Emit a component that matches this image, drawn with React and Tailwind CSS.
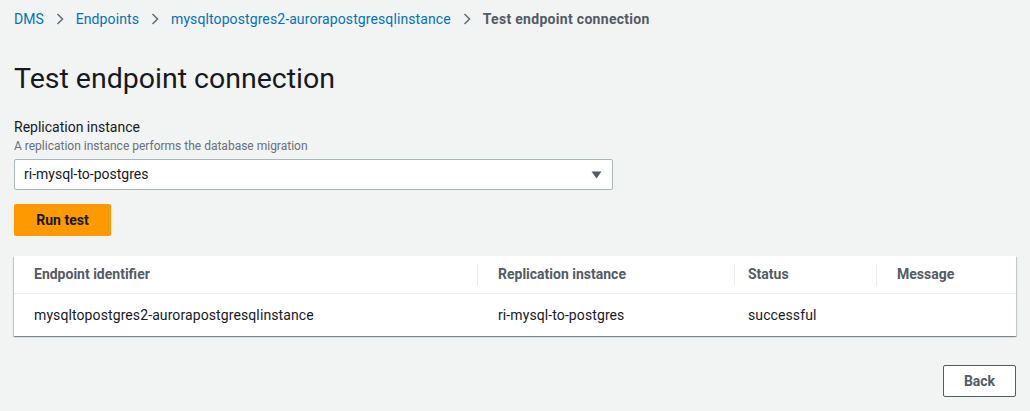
import React from "react";

const Chevron = () => (
  <svg width="10" height="14" viewBox="0 0 10 14" className="mx-[11px]">
    <path d="M2.5 2 L7.5 7 L2.5 12" fill="none" stroke="#687078" strokeWidth="1.6" />
  </svg>
);

export default function App() {
  return (
    <div
      className="w-[1030px] h-[411px] bg-[#f2f3f3] text-[#16191f] overflow-hidden"
      style={{ fontFamily: "Roboto, 'Liberation Sans', sans-serif" }}
    >
      <div className="px-[14px]">
        <nav className="flex items-center h-[38px] text-[14px]">
          <span className="text-[#0073bb]">DMS</span>
          <Chevron />
          <span className="text-[#0073bb] tracking-[0.1px]">Endpoints</span>
          <Chevron />
          <span className="text-[#0073bb] tracking-[0.1px]">mysqltopostgres2-aurorapostgresqlinstance</span>
          <Chevron />
          <span className="text-[#545b64] font-bold tracking-[0.3px]">Test endpoint connection</span>
        </nav>
        <h1 className="text-[28.5px] leading-[36px] mt-[23px] font-normal">Test endpoint connection</h1>
        <div className="mt-[20px]">
          <div className="text-[14px] leading-[20px]">Replication instance</div>
          <div className="text-[12px] leading-[18px] text-[#687078]">A replication instance performs the database migration</div>
          <div className="mt-[4px] w-[599px] h-[31px] bg-white border border-[#aab7b8] rounded-[2px] flex items-center justify-between pl-[9px] pr-[10px] text-[14px]">
            <span>ri-mysql-to-postgres</span>
            <svg width="11" height="8" viewBox="0 0 11 8">
              <path d="M0.5 0.5 L10.5 0.5 L5.5 7.5 Z" fill="#545b64" />
            </svg>
          </div>
          <button className="mt-[14px] h-[32px] w-[97px] bg-[#ff9900] rounded-[2px] text-[14px] font-bold text-[#16191f] flex items-center justify-center">
            Run test
          </button>
        </div>
        <div className="mt-[20px] w-[1002px] bg-white shadow-[0_1px_1px_0_rgba(0,28,36,0.3),1px_1px_1px_0_rgba(0,28,36,0.15),-1px_1px_1px_0_rgba(0,28,36,0.15)]">
          <div className="grid grid-cols-[464px_257px_142px_1fr] h-[38px] border-b border-[#eaeded] text-[14px] font-bold text-[#545b64]">
            <div className="flex items-center pl-[20px] relative">
              Endpoint identifier
              <span className="absolute right-0 top-[8px] h-[22px] w-px bg-[#eaeded]" />
            </div>
            <div className="flex items-center pl-[20px] relative">
              Replication instance
              <span className="absolute right-0 top-[8px] h-[22px] w-px bg-[#eaeded]" />
            </div>
            <div className="flex items-center pl-[13px] relative">
              Status
              <span className="absolute right-0 top-[8px] h-[22px] w-px bg-[#eaeded]" />
            </div>
            <div className="flex items-center pl-[20px]">Message</div>
          </div>
          <div className="grid grid-cols-[464px_257px_142px_1fr] h-[42px] text-[14px] tracking-[0.1px]">
            <div className="flex items-center pl-[20px]">mysqltopostgres2-aurorapostgresqlinstance</div>
            <div className="flex items-center pl-[20px]">ri-mysql-to-postgres</div>
            <div className="flex items-center pl-[13px]">successful</div>
            <div />
          </div>
        </div>
        <div className="flex justify-end w-[1002px] mt-[29px]">
          <button className="h-[32px] w-[73px] border border-[#545b64] rounded-[2px] bg-white text-[14px] font-bold text-[#545b64]">
            Back
          </button>
        </div>
      </div>
    </div>
  );
}
